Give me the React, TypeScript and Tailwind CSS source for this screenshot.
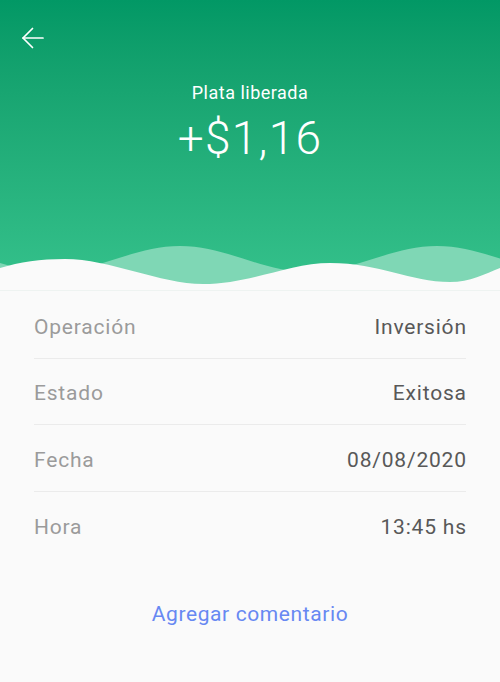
import React from "react";

const rows: [string, string][] = [
  ["Operación", "Inversión"],
  ["Estado", "Exitosa"],
  ["Fecha", "08/08/2020"],
  ["Hora", "13:45 hs"],
];

export default function App() {
  return (
    <div
      className="min-h-screen w-full bg-[#fafafa] flex flex-col"
      style={{ fontFamily: "Roboto, 'Noto Sans', sans-serif" }}
    >
      <div className="flex flex-col bg-gradient-to-b from-[#029865] to-[#35c28c]">
        <div className="h-[80px] px-[20px] pt-[26px]">
          <svg width="26" height="24" viewBox="0 0 26 24" fill="none" stroke="white" strokeWidth="1.7" strokeLinecap="round" strokeLinejoin="round">
            <path d="M3 12H23" />
            <path d="M12.5 2.5L3 12l9.5 9.5" />
          </svg>
        </div>
        <div className="text-white text-[18px] leading-[24px] tracking-[0.5px] text-center mt-[1px]">Plata liberada</div>
        <div className="text-white text-[46px] leading-[45px] tracking-[1.3px] font-light text-center mt-[11px]">+$1,16</div>
        <div className="h-[69px]" />
        <svg className="block w-full h-[60px]" viewBox="0 0 500 60" preserveAspectRatio="none">
          <path
            d="M-77,16 C-30.2,16 4.7,42 51.5,42 C98.3,42 133.2,16 180,16 C226.8,16 261.7,42 308.5,42 C355.3,42 390.2,16 437,16 C483.8,16 518.7,42 565.5,42 L565.5,60 L-77,60 Z"
            fill="#7fd7b5"
          />
          <path
            d="M0,38 C20,32 40,29 65,29 C110,29 160,54 203,54 C250,54 290,33 330,33 C380,33 410,52 450,52 C470,52 485,44 500,38 L500,60 L0,60 Z"
            fill="#fafafa"
          />
        </svg>
      </div>
      <div className="h-px bg-[#eef3f1]" />
      <div className="px-[34px] flex flex-col mt-[1px]">
        {rows.map(([label, value], i) => (
          <div
            key={label}
            className={
              "flex items-center justify-between pt-[20.67px] pb-[17px] " +
              (i < rows.length - 1 ? "border-b border-[#ebebeb]" : "")
            }
          >
            <span className="text-[21px] leading-[28px] tracking-[0.8px] text-[#9b9b9b]">{label}</span>
            <span className="text-[21px] leading-[28px] tracking-[0.8px] -mr-[0.8px] text-[#585858]">{value}</span>
          </div>
        ))}
      </div>
      <div className="flex justify-center mt-[42px]">
        <span className="text-[21px] leading-[28px] tracking-[0.6px] text-[#6788f2]">Agregar comentario</span>
      </div>
    </div>
  );
}
